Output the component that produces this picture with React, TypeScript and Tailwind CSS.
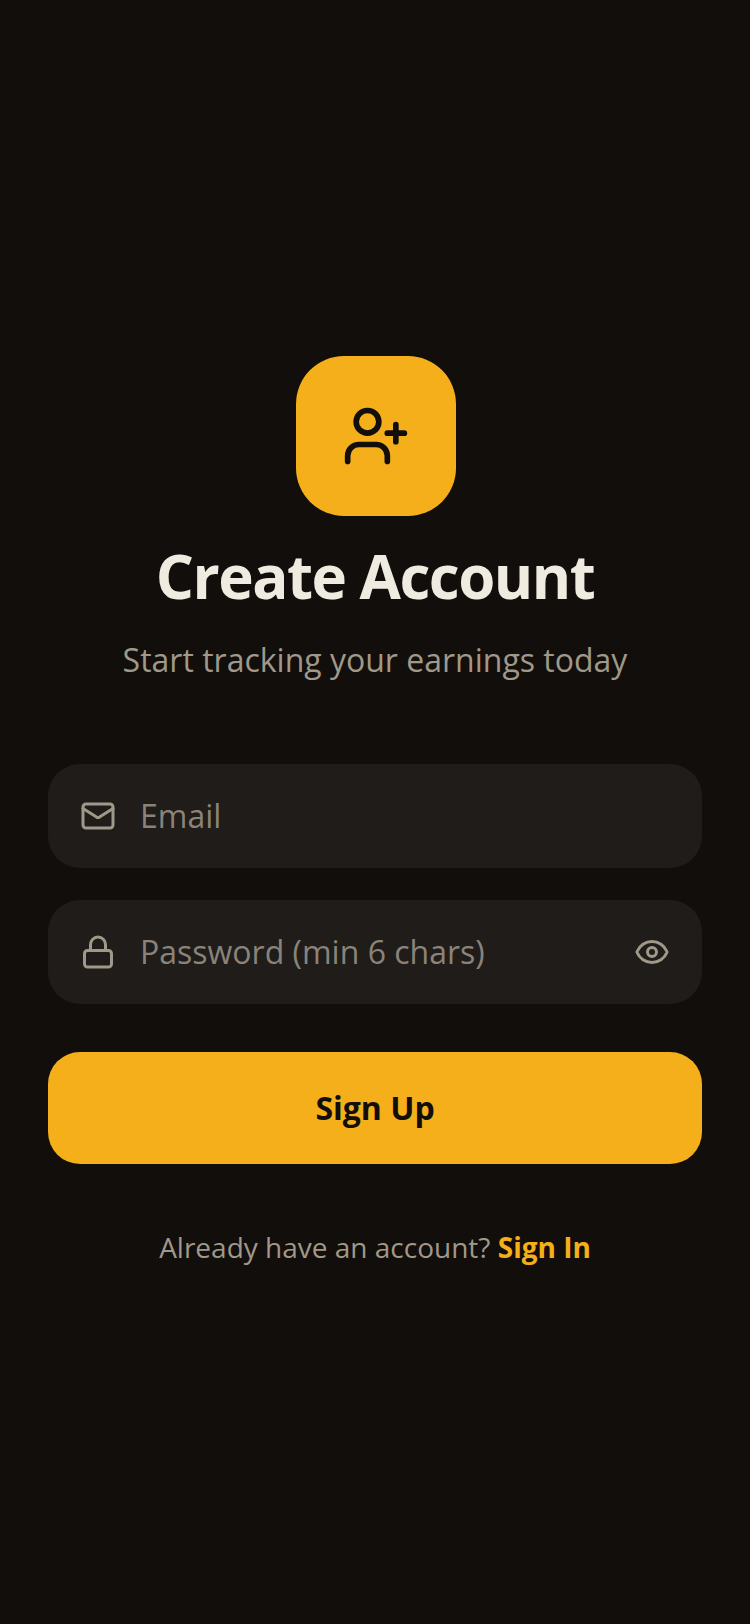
import { Eye, Lock, Mail, UserPlus } from "lucide-react";

export default function App() {
  return (
    <div className="min-h-[1624px] w-full bg-[#110e0c] flex flex-col justify-center px-12 font-['Open_Sans',sans-serif]">
      <div className="flex flex-col items-center">
        <div className="ml-0.5 w-40 h-40 rounded-[48px] bg-[#f4af1a] flex items-center justify-center">
          <UserPlus className="w-[68px] h-[68px] text-[#110e0c]" strokeWidth={2} />
        </div>
        <h1 className="mt-6 text-[60px] leading-[72px] font-bold tracking-[-1.5px] text-[#f0ebe0]">Create Account</h1>
        <p className="mt-6 text-[32px] leading-[48px] text-[#a09889]">Start tracking your earnings today</p>
      </div>

      <div className="mt-20 flex flex-col">
        {/* email */}
        <div className="h-[104px] rounded-[32px] bg-[#1f1c1a] flex items-center px-8 gap-6">
          <Mail className="w-9 h-9 text-[#a09889]" strokeWidth={2} />
          <span className="text-[32px] text-[#8a8379]">Email</span>
        </div>

        {/* password */}
        <div className="mt-8 h-[104px] rounded-[32px] bg-[#1f1c1a] flex items-center px-8 gap-6">
          <Lock className="w-9 h-9 text-[#a09889]" strokeWidth={2} />
          <span className="flex-1 text-[32px] text-[#8a8379]">Password (min 6 chars)</span>
          <Eye className="w-9 h-9 text-[#a09889]" strokeWidth={2} />
        </div>

        <button className="mt-12 h-28 rounded-[32px] bg-[#f4af1a] text-[#110e0c] text-[32px] font-bold">Sign Up</button>
      </div>

      <div className="mt-[63px] mb-px text-center text-[28px] leading-10 text-[#a09889]">
        Already have an account? <span className="font-bold text-[#f4af1a]">Sign In</span>
      </div>
    </div>
  );
}
